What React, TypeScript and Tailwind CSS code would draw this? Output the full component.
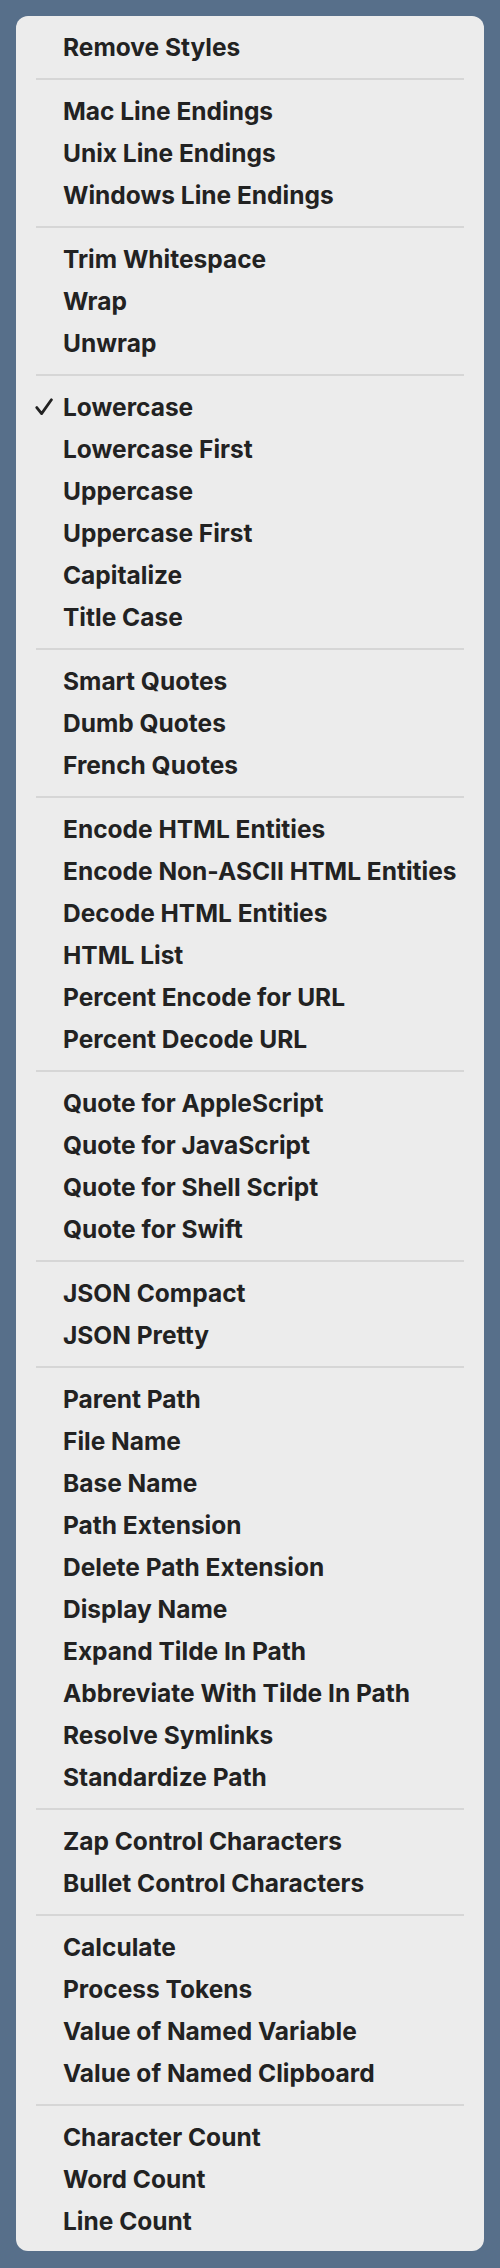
import React from "react";

const groups: string[][] = [
  ["Remove Styles"],
  ["Mac Line Endings", "Unix Line Endings", "Windows Line Endings"],
  ["Trim Whitespace", "Wrap", "Unwrap"],
  ["Lowercase", "Lowercase First", "Uppercase", "Uppercase First", "Capitalize", "Title Case"],
  ["Smart Quotes", "Dumb Quotes", "French Quotes"],
  [
    "Encode HTML Entities",
    "Encode Non-ASCII HTML Entities",
    "Decode HTML Entities",
    "HTML List",
    "Percent Encode for URL",
    "Percent Decode URL",
  ],
  ["Quote for AppleScript", "Quote for JavaScript", "Quote for Shell Script", "Quote for Swift"],
  ["JSON Compact", "JSON Pretty"],
  [
    "Parent Path",
    "File Name",
    "Base Name",
    "Path Extension",
    "Delete Path Extension",
    "Display Name",
    "Expand Tilde In Path",
    "Abbreviate With Tilde In Path",
    "Resolve Symlinks",
    "Standardize Path",
  ],
  ["Zap Control Characters", "Bullet Control Characters"],
  ["Calculate", "Process Tokens", "Value of Named Variable", "Value of Named Clipboard"],
  ["Character Count", "Word Count", "Line Count"],
];

function Check() {
  return (
    <svg
      viewBox="0 0 18 18"
      className="absolute left-[19px] top-[12px] w-[18px] h-[18px]"
    >
      <path
        d="M1.8 9.6 L6.6 15.6 L16.4 1.8"
        fill="none"
        stroke="#222222"
        strokeWidth="2.8"
        strokeLinecap="round"
        strokeLinejoin="round"
      />
    </svg>
  );
}

export default function App() {
  return (
    <div className="min-h-[2268px] w-[500px] bg-[#576f8a] pt-[16px] pl-[16px]">
      <div
        className="w-[468px] h-[2235px] rounded-[12px] bg-[#ececec] pt-[10px] text-[#222222]"
        style={{ fontFamily: "Inter, 'Noto Sans', sans-serif" }}
      >
        {groups.map((g, gi) => (
          <div key={gi}>
            {gi > 0 && (
              <div className="h-[22px] flex items-center px-[20px]">
                <div className="h-[2px] w-full bg-[#d6d6d6]" />
              </div>
            )}
            {g.map((item) => (
              <div
                key={item}
                className="relative h-[42px] flex items-center pl-[47px] text-[24.5px] font-bold leading-none"
              >
                {item === "Lowercase" && <Check />}
                <span>{item}</span>
              </div>
            ))}
          </div>
        ))}
      </div>
    </div>
  );
}
